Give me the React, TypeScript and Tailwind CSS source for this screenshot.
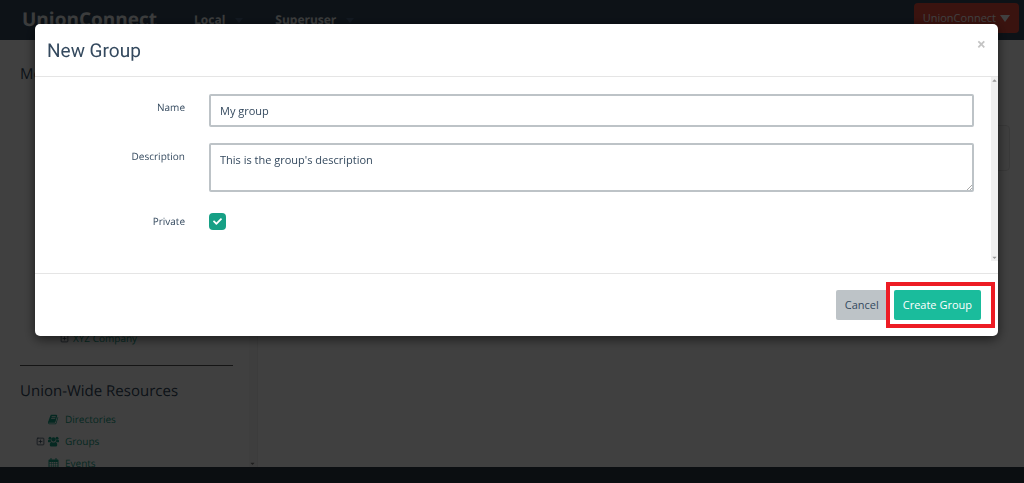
import { useState } from "react"
import { FaCaretDown, FaCaretUp, FaCheck } from "react-icons/fa"
import { FiPlusSquare } from "react-icons/fi"

function BookIcon() {
  return (
    <svg width="11" height="11" viewBox="0 0 1792 1792" fill="currentColor" aria-hidden="true">
      <path d="M1639 478q40 57 18 129l-275 906q-19 64-76.500 107.500t-122.500 43.500h-923q-77 0-148.500-53.500t-99.500-131.500q-24-67-2-127 0-4 3-27t4-37q1-8-3-21.500t-3-19.500q2-11 8-21t16.500-23.500 16.500-23.500q23-38 45-91.500t30-91.500q3-10 .5-30t-.5-28q3-11 17-28t17-23q21-36 42-92t25-90q1-9-2.500-32t.5-28q4-13 22-30.500t22-22.500q19-26 42.500-84.500t27.500-96.500q1-8-3-25.500t-2-26.500q2-8 9-18t18-23 17-21q8-12 16.500-30.500t15-35 16-36 19.500-32 26.500-23.500 36-11.500 47.500 5.500l-1 3q38-9 51-9h761q74 0 114 56t18 130l-274 906q-36 119-71.500 153.500t-128.500 34.500h-869q-27 0-38 15-11 16-1 43 24 70 144 70h923q29 0 56-15.500t35-41.500l300-987q7-22 5-57 38 15 59 43zm-1064 2q-4 13 2 22.500t20 9.500h608q13 0 25.500-9.500t16.500-22.500l21-64q4-13-2-22.500t-20-9.500h-608q-13 0-25.500 9.500t-16.500 22.500zm-83 256q-4 13 2 22.500t20 9.500h608q13 0 25.500-9.500t16.500-22.500l21-64q4-13-2-22.500t-20-9.500h-608q-13 0-25.500 9.500t-16.500 22.500z" />
    </svg>
  )
}

function GroupIcon() {
  return (
    <svg width="11" height="11" viewBox="0 0 22 22" fill="currentColor" aria-hidden="true">
      <circle cx="4" cy="4.500" r="3" />
      <circle cx="18" cy="4.500" r="3" />
      <circle cx="11" cy="7" r="4.300" />
      <path d="M0 12V10C0 8 1 7 2 7.500Q4 8.800 6 8Q6.200 10 7.500 11Q5.500 11.300 4.500 12.600H1.500Q0 12.600 0 12ZM22 12V10C22 8 21 7 20 7.500Q18 8.800 16 8Q15.800 10 14.500 11Q16.500 11.300 17.500 12.600H20.500Q22 12.600 22 12Z" />
      <path d="M3.500 18C3.500 14 5 11.800 7.500 11.800Q11 14.400 14.500 11.800C17 11.800 18.500 14 18.500 18Q18.500 21 15.500 21H6.500Q3.500 21 3.500 18Z" />
    </svg>
  )
}

function CalendarIcon() {
  return (
    <svg width="11" height="11" viewBox="0 0 22 22" fill="currentColor" aria-hidden="true">
      <path d="M5 0H7V3H15V0H17V3H19.500Q21 3 21 4.500V20.500Q21 22 19.500 22H2.500Q1 22 1 20.500V4.500Q1 3 2.500 3H5ZM3 8V11H6.500V8ZM7.500 8V11H10.500V8ZM11.500 8V11H14.500V8ZM15.500 8V11H19V8ZM3 12V15.500H6.500V12ZM7.500 12V15.500H10.500V12ZM11.500 12V15.500H14.500V12ZM15.500 12V15.500H19V12ZM3 16.500V20H6.500V16.500ZM7.500 16.500V20H10.500V16.500ZM11.500 16.500V20H14.500V16.500ZM15.500 16.500V20H19V16.500Z" fillRule="evenodd" />
    </svg>
  )
}

const resources = [
  { name: "Directories", icon: BookIcon, expandable: false },
  { name: "Groups", icon: GroupIcon, expandable: true },
  { name: "Events", icon: CalendarIcon, expandable: false },
]

function Navbar() {
  return (
    <header className="flex items-start h-10 shrink-0 bg-[#34495e] pl-[22px] pr-[5px] text-[#ecf0f1]">
      <a href="#" className="w-[172px] pt-[7px] text-[19px] leading-6 font-bold">UnionConnect</a>
      <nav className="flex gap-8 pt-[10px] text-xs leading-5 font-bold">
        <a href="#" className="flex items-center gap-[10px]">
          Local
          <span className="border-x-4 border-t-[5px] border-x-transparent border-t-[#4b6483]" />
        </a>
        <a href="#" className="flex items-center gap-[10px]">
          Superuser
          <span className="border-x-4 border-t-[5px] border-x-transparent border-t-[#4b6483]" />
        </a>
      </nav>
      <button className="flex items-center gap-1 ml-auto mt-[3px] h-[30px] rounded-sm bg-[#e74c3c] px-[9px] text-[11px] text-white">
        UnionConnect
        <span className="border-x-[5px] border-t-[7px] border-x-transparent border-t-white" />
      </button>
    </header>
  )
}

function Sidebar() {
  return (
    <aside className="flex w-[258px] shrink-0 border-r border-[#ededed]">
      <div className="flex-1 pl-5 pr-4 pt-[22px]">
        <section className="flex flex-col justify-between h-[287px]">
          <h2 className="text-[15px] leading-6">Members</h2>
          <a href="#" className="flex items-center gap-1 pl-10 text-[10px] leading-[22px] text-[#16a085]">
            <FiPlusSquare size={9} className="text-[#34495e]" />
            XYZ Company
          </a>
        </section>
        <hr className="mt-4 border-t border-[#555]" />
        <h2 className="mt-[13px] text-[15px] leading-6">Union-Wide Resources</h2>
        <ul className="mt-[5px] text-[10px] leading-[22px] text-[#16a085]">
          {resources.map(({ name, icon: Icon, expandable }) => (
            <li key={name} className="flex items-center pl-4">
              <span className="w-3 text-[#34495e]">{expandable && <FiPlusSquare size={9} />}</span>
              <a href="#" className="flex items-center gap-[6px]">
                <Icon />
                {name}
              </a>
            </li>
          ))}
        </ul>
      </div>
      <div className="flex flex-col justify-end w-2 bg-[#f8f8f8] text-[#777]">
        <FaCaretDown size={7} />
      </div>
    </aside>
  )
}

function NewGroupDialog() {
  const [name, setName] = useState("My group")
  const [description, setDescription] = useState("This is the group's description")
  const [isPrivate, setIsPrivate] = useState(true)

  return (
    <div role="dialog" aria-labelledby="dialog-title" className="w-full rounded-[5px] bg-white shadow-[0_3px_12px_rgba(0,0,0,0.6)]">
      <div className="flex items-start justify-between h-[53px] border-b border-[#e5e5e5] px-3 pt-3">
        <h1 id="dialog-title" className="font-['Roboto',sans-serif] text-[19px] leading-[30px]">New Group</h1>
        <button aria-label="Close" className="text-base leading-4 font-bold text-[#c4c4c4]">×</button>
      </div>

      <div className="flex">
        <form className="grid grid-cols-[150px_1fr] flex-1 gap-x-6 gap-y-4 h-[196px] content-start pt-[17px] pr-[17px] text-[11px]">
          <label htmlFor="name" className="pt-1 text-right text-[10px] leading-[18px]">Name</label>
          <input
            id="name"
            value={name}
            onChange={(e) => setName(e.target.value)}
            className="h-[33px] rounded-[2px] border-2 border-[#bdc3c7] px-[9px]"
          />
          <label htmlFor="description" className="pt-1 text-right text-[10px] leading-[18px]">Description</label>
          <div className="relative">
            <textarea
              id="description"
              value={description}
              onChange={(e) => setDescription(e.target.value)}
              className="block w-full h-[49px] rounded-[2px] border-2 border-[#bdc3c7] px-[9px] py-[6px] leading-[18px] resize-none"
            />
            <svg width="5" height="5" viewBox="0 0 5 5" className="absolute right-[2px] bottom-[2px] stroke-[#aaa]">
              <path d="M0 5L5 0M3 5L5 3" />
            </svg>
          </div>
          <label htmlFor="private" className="pt-1 text-right text-[10px] leading-[18px]">Private</label>
          <div className="relative mt-[5px] size-[17px]">
            <input
              id="private"
              type="checkbox"
              checked={isPrivate}
              onChange={(e) => setIsPrivate(e.target.checked)}
              className="block appearance-none size-[17px] rounded-[4px] bg-[#bdc3c7] checked:bg-[#16a085]"
            />
            {isPrivate && <FaCheck size={9} className="absolute left-1 top-1 text-white pointer-events-none" />}
          </div>
        </form>
        <div className="flex flex-col justify-between w-[7px] h-[184px] bg-[#f0f0f0] text-[#999]">
          <FaCaretUp size={7} />
          <FaCaretDown size={7} />
        </div>
      </div>

      <div className="flex justify-end gap-[6px] border-t border-[#e5e5e5] py-4 pr-[17px] text-[11px]">
        <button className="h-[30px] rounded-[2px] bg-[#bdc3c7] px-[9px]">Cancel</button>
        <div className="relative">
          <button className="h-[30px] rounded-[2px] bg-[#1abc9c] px-[9px] text-white">Create Group</button>
          <span className="absolute -top-2 -bottom-2 -left-2 -right-[14px] border-4 border-[#ed1c24] pointer-events-none" />
        </div>
      </div>
    </div>
  )
}

export default function App() {
  return (
    <div className="flex flex-col h-screen overflow-hidden bg-white font-['Open_Sans',sans-serif] text-[#34495e] [text-rendering:geometricPrecision]">
      <Navbar />
      <div className="flex flex-1 min-h-0 overflow-hidden">
        <Sidebar />
        <main className="flex-1 pl-4 pr-[14px] pt-[85px]">
          <div className="h-[46px] rounded-sm border border-[#e3e3e3] bg-[#f8f8f8]" />
        </main>
      </div>
      <footer className="h-4 shrink-0 bg-[#2c3845]" />

      <div className="fixed inset-0 flex items-start bg-black/75 pl-[35px] pr-[26px] pt-6">
        <NewGroupDialog />
      </div>
    </div>
  )
}
